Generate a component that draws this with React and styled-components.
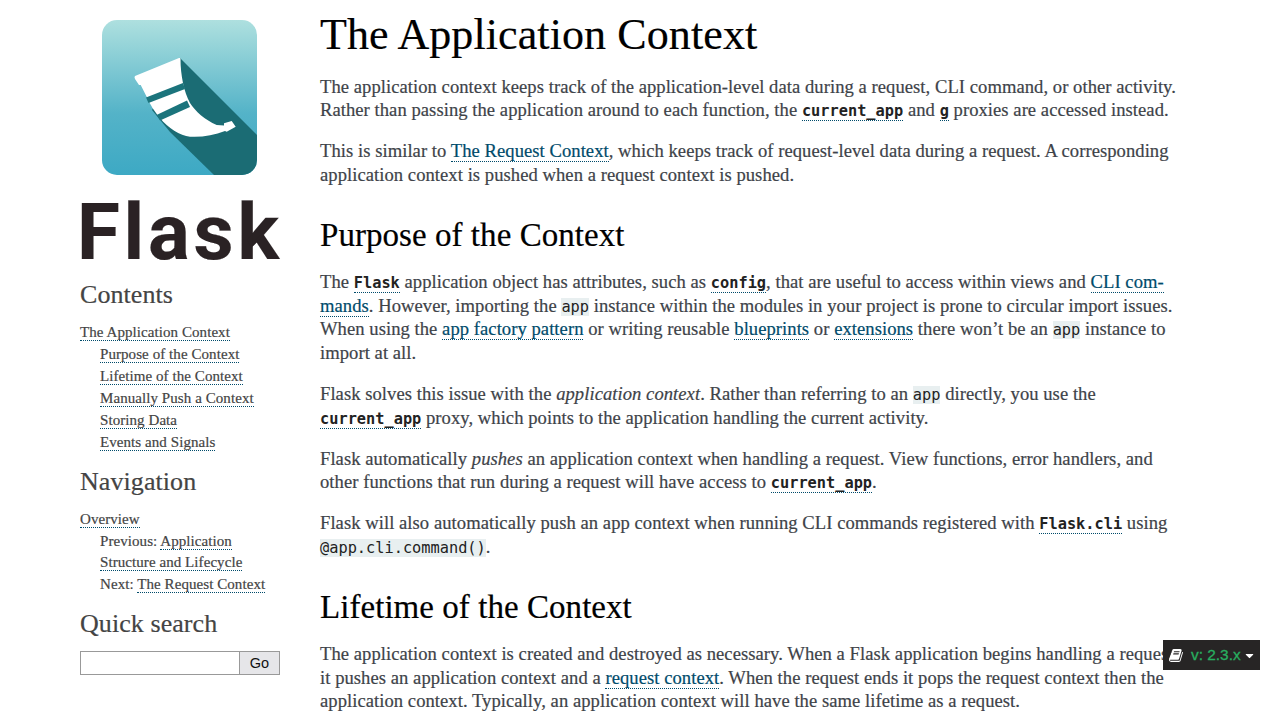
import React from "react";
import styled, { createGlobalStyle } from "styled-components";
import { FaCaretDown } from "react-icons/fa";

const serif = `"Liberation Serif", "Times New Roman", serif`;
const mono = `"DejaVu Sans Mono", monospace`;

const GlobalStyle = createGlobalStyle`
  html, body {
    margin: 0;
    padding: 0;
    height: 720px;
    overflow: hidden;
    background: #fff;
  }
`;

const Page = styled.div`
  display: flex;
  align-items: flex-start;
  gap: 40px;
  padding-left: 80px;
  font-family: ${serif};
  color: #3e4349;
  -webkit-text-stroke: 0.2px;
`;

const Sidebar = styled.aside`
  width: 200px;
  flex: none;
  padding-top: 20px;
  font-size: 15px;
  letter-spacing: 0.07px;
  line-height: 21px;
  color: #444;
`;

const LogoBlock = styled.div`
  display: flex;
  flex-direction: column;
  padding-left: 22px;
`;

const LogoWord = styled.div`
  width: 200px;
  height: 75px;
  margin: 25px 0 0 -25px;
  font-family: Roboto, sans-serif;
  font-weight: 700;
  font-size: 78px;
  line-height: 66px;
  letter-spacing: 3.8px;
  color: #2a2224;
  white-space: nowrap;
`;

const SideTitle = styled.h3`
  margin: ${(p) => p.$top}px 0 11px;
  font-size: 26px;
  font-weight: 400;
  line-height: 32px;
  color: #444;
`;

const SideList = styled.ul`
  list-style: none;
  margin: 0;
  padding: ${(p) => (p.$nested ? "1px 0 0 20px" : "0")};
`;

const SideItem = styled.li`
  margin-bottom: 1px;
`;

const SideLink = styled.a`
  color: #444;
  text-decoration: none;
  border-bottom: 1px dotted #004b6b;
`;

const SearchForm = styled.form`
  display: flex;
  height: 24px;
`;

const SearchInput = styled.input`
  flex: 1;
  min-width: 0;
  box-sizing: border-box;
  margin: 0;
  border: 1px solid #999;
  border-right: none;
  background: #fff;
`;

const GoButton = styled.button`
  width: 41px;
  box-sizing: border-box;
  margin: 0;
  padding: 0;
  border: 1px solid #999;
  background: #e6e6e9;
  color: #111;
  font-family: "Liberation Sans", Arial, sans-serif;
  font-size: 14.5px;
  -webkit-text-stroke: 0;
`;

const Main = styled.main`
  width: 862px;
  flex: none;
  font-size: 18.6px;
  line-height: 23.8px;
  letter-spacing: 0.05px;
`;

const Title = styled.h1`
  margin: 10px 0 14.6px;
  font-size: 44px;
  font-weight: 400;
  line-height: 50px;
  color: #000;
  letter-spacing: 0.1px;
`;

const Heading = styled.h2`
  margin: 28px 0 15px;
  font-size: 33px;
  font-weight: 400;
  line-height: 40px;
  color: #000;
`;

const Para = styled.p`
  margin: 0 0 17px;
  white-space: nowrap;
`;

const Link = styled.a`
  color: #004b6b;
  text-decoration: none;
  border-bottom: 1px dotted #004b6b;
`;

const RefCode = styled.a`
  font-family: ${mono};
  font-size: 15.3px;
  font-weight: 700;
  line-height: 1;
  letter-spacing: 0;
  color: #222;
  text-decoration: none;
  border-bottom: 1px dotted #004b6b;
  -webkit-text-stroke: 0;
`;

const Code = styled.code`
  font-family: ${mono};
  font-size: 15.3px;
  line-height: 1;
  letter-spacing: 0;
  color: #222;
  background: #e8eff0;
  -webkit-text-stroke: 0;
`;

const VersionBadge = styled.div`
  position: fixed;
  right: 20px;
  bottom: 50px;
  width: 97px;
  height: 30px;
  box-sizing: border-box;
  display: flex;
  align-items: center;
  padding-left: 6px;
  background: #272525;
  font-family: "Liberation Sans", Arial, sans-serif;
  font-size: 15.4px;
  color: #27ae60;
  svg {
    color: #fff;
    flex: none;
  }
`;

const VersionText = styled.span`
  margin: 0 2px 0 7px;
  -webkit-text-stroke: 0.3px;
`;

function BookIcon() {
  return (
    <svg width="15" height="15" viewBox="0 0 1792 1792" fill="currentColor">
      <path d="M1639 478q40 57 18 129l-275 906q-19 64-76.5 107.5t-122.5 43.5h-923q-77 0-148.5-53.5t-99.5-131.5q-24-67-2-127 0-4 3-27t4-37q1-8-3-21.5t-3-19.5q2-11 8-21t16.5-23.5 16.5-23.5q23-38 45-91.5t30-91.5q3-10 .5-30t-.5-28q3-11 17-28t17-23q21-36 42-92t25-90q1-9-2.5-32t.5-28q4-13 22-30.5t22-22.5q19-26 42.5-84.5t27.5-96.5q1-8-3-25.5t-2-26.5q2-8 9-18t18-23 17-21q8-12 16.5-30.5t15-35 16-36 19.5-32 26.5-23.5 36-11.5 47.5 5.5l-1 3q38-9 51-9h761q74 0 114 56t18 130l-274 906q-36 119-71.5 153.5t-128.5 34.5h-869q-27 0-38 15-11 16-1 43 24 70 144 70h923q29 0 56-15.5t35-41.5l300-987q7-22 5-57 38 15 59 43zm-1064 2q-4 13 2 22.5t20 9.5h608q13 0 25.5-9.5t16.5-22.5l21-64q4-13-2-22.5t-20-9.5h-608q-13 0-25.5 9.5t-16.5 22.5zm-83 256q-4 13 2 22.5t20 9.5h608q13 0 25.5-9.5t16.5-22.5l21-64q4-13-2-22.5t-20-9.5h-608q-13 0-25.5 9.5t-16.5 22.5z" />
    </svg>
  );
}

function FlaskIcon() {
  return (
    <svg width="155" height="155" viewBox="0 0 155 155">
      <defs>
        <linearGradient id="hornBg" x1="0" y1="0" x2="0" y2="1">
          <stop offset="0" stopColor="#aee0df" />
          <stop offset="0.6" stopColor="#54b3c8" />
          <stop offset="1" stopColor="#3da9c4" />
        </linearGradient>
        <clipPath id="hornClip">
          <rect width="155" height="155" rx="15" />
        </clipPath>
      </defs>
      <g clipPath="url(#hornClip)">
        <rect width="155" height="155" fill="url(#hornBg)" />
        <path d="M78 38 L155 115 V155 H112 L68 112 L50 90 Z" fill="#1b6c74" />
      </g>
      <path
        d="M33 56 L77 38 Q78.5 37.5 78.5 39 C78.5 55 82 72 88 83 C93 91 103 100 114.7 105 L122 105.5 L122 103.3 L129.7 101 L133.7 106.7 L124.7 111.7 L123 111 C112 115 100 117.5 88 116.7 C78 115.5 66 108 58 98 C52 91 48 84 46.3 80 L38.7 65 L37 65 L33 59 Q32 57 33 56 Z"
        fill="#fff"
      />
      <path d="M44 77.5 L81 63 L83 69 L46.5 83 Z" fill="#1b747c" />
      <path d="M54.5 95 L85 80.5 L88 87 L58 100.5 Z" fill="#1b747c" />
    </svg>
  );
}

export default function App() {
  return (
    <>
      <GlobalStyle />
      <Page>
        <Sidebar>
          <LogoBlock>
            <FlaskIcon />
            <LogoWord>Flask</LogoWord>
          </LogoBlock>

          <SideTitle $top={4}>Contents</SideTitle>
          <SideList>
            <SideItem>
              <SideLink href="#">The Application Context</SideLink>
              <SideList $nested>
                <SideItem>
                  <SideLink href="#">Purpose of the Context</SideLink>
                </SideItem>
                <SideItem>
                  <SideLink href="#">Lifetime of the Context</SideLink>
                </SideItem>
                <SideItem>
                  <SideLink href="#">Manually Push a Context</SideLink>
                </SideItem>
                <SideItem>
                  <SideLink href="#">Storing Data</SideLink>
                </SideItem>
                <SideItem>
                  <SideLink href="#">Events and Signals</SideLink>
                </SideItem>
              </SideList>
            </SideItem>
          </SideList>

          <SideTitle $top={13}>Navigation</SideTitle>
          <SideList>
            <SideItem>
              <SideLink href="#">Overview</SideLink>
              <SideList $nested>
                <SideItem>
                  Previous: <SideLink href="#">Application</SideLink>
                  <br />
                  <SideLink href="#">Structure and Lifecycle</SideLink>
                </SideItem>
                <SideItem>
                  Next: <SideLink href="#">The Request Context</SideLink>
                </SideItem>
              </SideList>
            </SideItem>
          </SideList>

          <SideTitle $top={13}>Quick search</SideTitle>
          <SearchForm>
            <SearchInput type="text" />
            <GoButton type="button">Go</GoButton>
          </SearchForm>
        </Sidebar>

        <Main>
          <Title>The Application Context</Title>
          <Para>
            The application context keeps track of the application-level data during a request, CLI command, or other activity.
            <br />
            Rather than passing the application around to each function, the <RefCode href="#">current_app</RefCode> and <RefCode href="#">g</RefCode> proxies are accessed instead.
          </Para>
          <Para>
            This is similar to <Link href="#">The Request Context</Link>, which keeps track of request-level data during a request. A corresponding
            <br />
            application context is pushed when a request context is pushed.
          </Para>

          <Heading>Purpose of the Context</Heading>
          <Para>
            The <RefCode href="#">Flask</RefCode> application object has attributes, such as <RefCode href="#">config</RefCode>, that are useful to access within views and <Link href="#">CLI com-</Link>
            <br />
            <Link href="#">mands</Link>. However, importing the <Code>app</Code> instance within the modules in your project is prone to circular import issues.
            <br />
            When using the <Link href="#">app factory pattern</Link> or writing reusable <Link href="#">blueprints</Link> or <Link href="#">extensions</Link> there won’t be an <Code>app</Code> instance to
            <br />
            import at all.
          </Para>
          <Para>
            Flask solves this issue with the <em>application context</em>. Rather than referring to an <Code>app</Code> directly, you use the
            <br />
            <RefCode href="#">current_app</RefCode> proxy, which points to the application handling the current activity.
          </Para>
          <Para>
            Flask automatically <em>pushes</em> an application context when handling a request. View functions, error handlers, and
            <br />
            other functions that run during a request will have access to <RefCode href="#">current_app</RefCode>.
          </Para>
          <Para>
            Flask will also automatically push an app context when running CLI commands registered with <RefCode href="#">Flask.cli</RefCode> using
            <br />
            <Code>@app.cli.command()</Code>.
          </Para>

          <Heading>Lifetime of the Context</Heading>
          <Para>
            The application context is created and destroyed as necessary. When a Flask application begins handling a request,
            <br />
            it pushes an application context and a <Link href="#">request context</Link>. When the request ends it pops the request context then the
            <br />
            application context. Typically, an application context will have the same lifetime as a request.
          </Para>
        </Main>
      </Page>

      <VersionBadge>
        <BookIcon />
        <VersionText>v: 2.3.x</VersionText>
        <FaCaretDown size={13} />
      </VersionBadge>
    </>
  );
}
